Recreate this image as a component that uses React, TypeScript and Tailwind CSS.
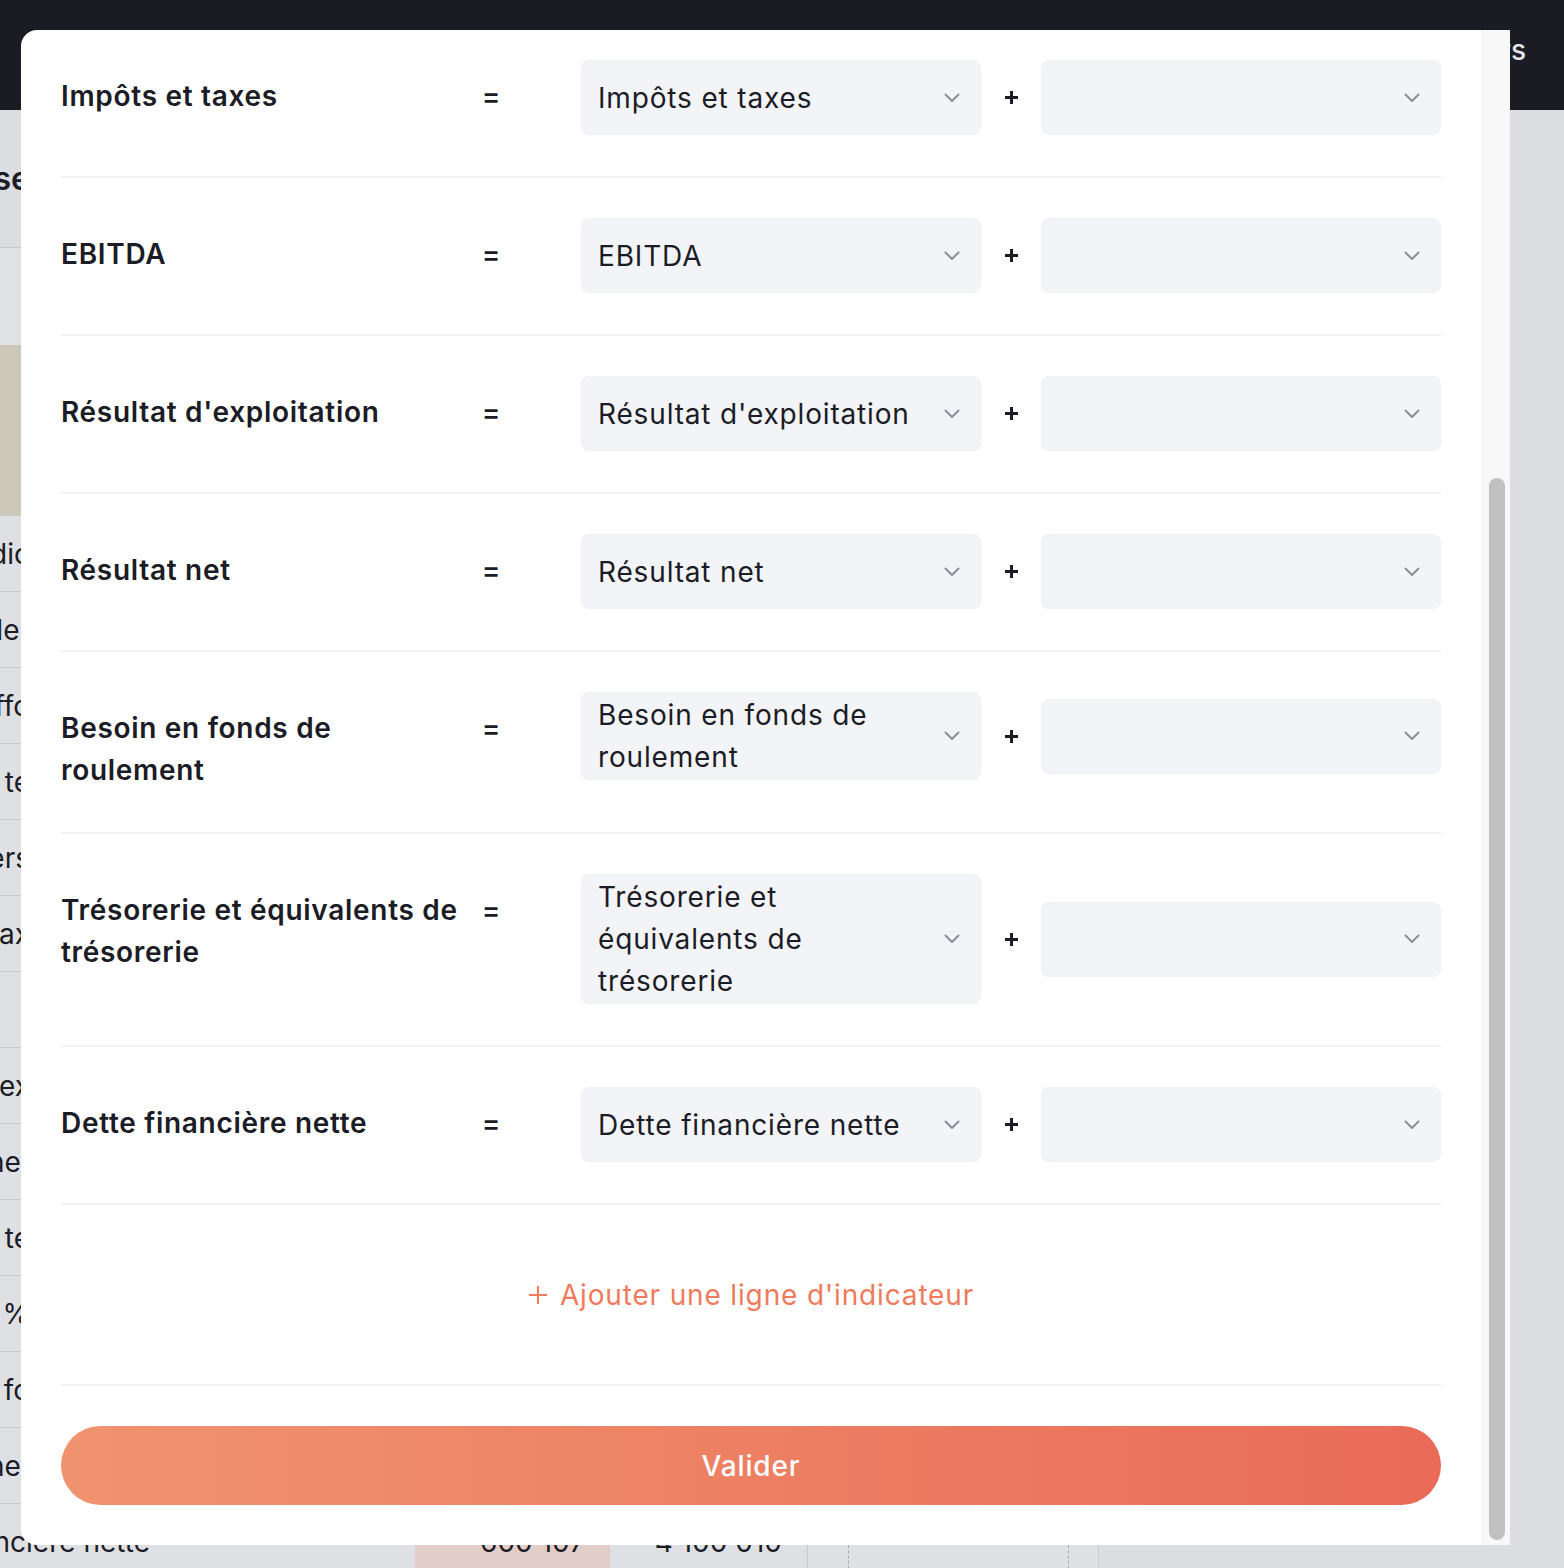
const FONT = "font-['Inter','Open_Sans',sans-serif]";

type Row = { label: string; value: string };

const rows: Row[] = [
  { label: "Impôts et taxes", value: "Impôts et taxes" },
  { label: "EBITDA", value: "EBITDA" },
  { label: "Résultat d'exploitation", value: "Résultat d'exploitation" },
  { label: "Résultat net", value: "Résultat net" },
  { label: "Besoin en fonds de roulement", value: "Besoin en fonds de roulement" },
  { label: "Trésorerie et équivalents de trésorerie", value: "Trésorerie et équivalents de trésorerie" },
  { label: "Dette financière nette", value: "Dette financière nette" },
];

// background table labels (only their tail is visible next to the modal)
const bgRows = [
  "Taux de marge indic",
  "Chiffre d'affaires der",
  "Effectif moyen effo",
  "Charges externe te",
  "Autres produits divers",
  "Impôts et tax",
  "",
  "Charges d'ex",
  "Résultat net",
  "Besoin en fonds te",
  "Marge brute %",
  "Besoin en fo",
  "Résultat net",
];

const Chevron = () => (
  <svg width="16" height="10" viewBox="0 0 16 10" fill="none" className="shrink-0">
    <path d="M1.5 1.5 8 8l6.5-6.5" stroke="#8d8e96" strokeWidth="2" strokeLinecap="round" strokeLinejoin="round" />
  </svg>
);

const Select = ({ value }: { value?: string }) => (
  <div className="w-[400px] min-h-[75px] py-[1px] pl-[16px] pr-[20px] flex items-center rounded-[8px] bg-[#f3f4f8] border border-[#eef0f4]">
    <div className="w-[326px] text-[28px] leading-[42px] tracking-[0.03em] text-[#1b1c25]">{value}</div>
    <div className="ml-auto">
      <Chevron />
    </div>
  </div>
);

const PlusSign = () => (
  <svg width="15" height="15" viewBox="0 0 15 15">
    <path d="M7.5 1v13M1 7.5h13" stroke="#1b1c25" strokeWidth="3" />
  </svg>
);

const IndicatorRow = ({ row, first }: { row: Row; first?: boolean }) => (
  <div className={`flex items-start border-b-2 border-[#f1f2f6] pb-[41px] ${first ? "pt-[30px]" : "pt-[40px]"}`}>
    <div className="w-[400px] shrink-0 pt-[15px] text-[28px] leading-[42px] tracking-[0.025em] font-semibold text-[#1b1c25]">
      {row.label}
    </div>
    <div className="w-[60px] shrink-0 pt-[15px] text-center text-[28px] leading-[42px] font-medium text-[#1b1c25]">
      =
    </div>
    <div className="ml-[60px] flex items-center">
      <Select value={row.value} />
      <div className="w-[60px] flex justify-center">
        <PlusSign />
      </div>
      <Select />
    </div>
  </div>
);

export default function App() {
  return (
    <div className={`relative w-[1564px] h-[1568px] overflow-hidden bg-[#dcdde1] ${FONT}`}>
      {/* Page behind the modal */}
      <div className="h-[110px] bg-[#1a1b23] flex items-center justify-end pr-[38px] pb-[10px]">
        <span className="text-[28px] font-medium text-[#e4e4e8]">Indicateurs</span>
      </div>
      <div className="w-[1100px] flex flex-col text-[28px] text-[#1b1c25]">
        <div className="h-[138px] flex items-center border-b border-[#c8c9cd]">
          <div className="w-[30px] flex justify-end overflow-hidden whitespace-nowrap font-semibold text-[32px]">
            Synthèse
          </div>
        </div>
        <div className="h-[97px] bg-[#e0e1e4]" />
        <div className="h-[170px] bg-[#cbc7b9]" />
        {bgRows.map((t, i) => (
          <div key={i} className="h-[76px] flex items-center border-t border-[#c8c9cd] bg-[#dfe0e3]">
            <div className="w-[30px] flex justify-end overflow-hidden whitespace-nowrap">{t}</div>
          </div>
        ))}
        <div className="h-[76px] flex items-center border-t border-[#c8c9cd] bg-[#dfe0e3]">
          <div className="w-[150px] flex justify-end overflow-hidden whitespace-nowrap">Dette financière nette</div>
          <div className="ml-[265px] w-[195px] h-full bg-[#e3cdc8] flex items-center justify-end pr-[25px]">600 107</div>
          <div className="w-[198px] h-full flex items-center justify-end pr-[25px] border-r border-[#c8c9cd]">4 100 010</div>
          <div className="ml-[40px] h-full border-l border-dashed border-[#a9aaae]" />
          <div className="ml-[219px] h-full border-l border-dashed border-[#a9aaae]" />
          <div className="ml-[29px] h-full border-l border-[#c8c9cd]" />
        </div>
      </div>

      {/* Modal */}
      <div className="absolute left-[21px] top-[30px] w-[1489px] h-[1515px] bg-white rounded-l-[16px] overflow-hidden flex">
        <div className="flex-1 pl-[40px] pr-[41px] flex flex-col">
          {rows.map((r, i) => (
            <IndicatorRow key={r.label} row={r} first={i === 0} />
          ))}
          <div className="h-[181px] flex items-center justify-center border-b-2 border-[#f1f2f6]">
            <button className="flex items-center gap-[12px] text-[28px] leading-[42px] tracking-[0.03em] text-[#f07b5c]">
              <svg width="20" height="20" viewBox="0 0 20 20">
                <path d="M10 1v18M1 10h18" stroke="#f07b5c" strokeWidth="2" />
              </svg>
              Ajouter une ligne d'indicateur
            </button>
          </div>
          <button className="mt-[40px] h-[79px] w-full rounded-full bg-linear-to-r from-[#f0936f] to-[#e96b57] text-white text-[28px] tracking-[0.03em] font-medium">
            Valider
          </button>
        </div>
        {/* scrollbar */}
        <div className="w-[28px] shrink-0 bg-[#f8f8f8] border-l border-[#ebebeb] pl-[6px] pt-[448px] pb-[5px]">
          <div className="w-[16px] h-[1062px] rounded-full bg-[#c1c1c1]" />
        </div>
      </div>
    </div>
  );
}
